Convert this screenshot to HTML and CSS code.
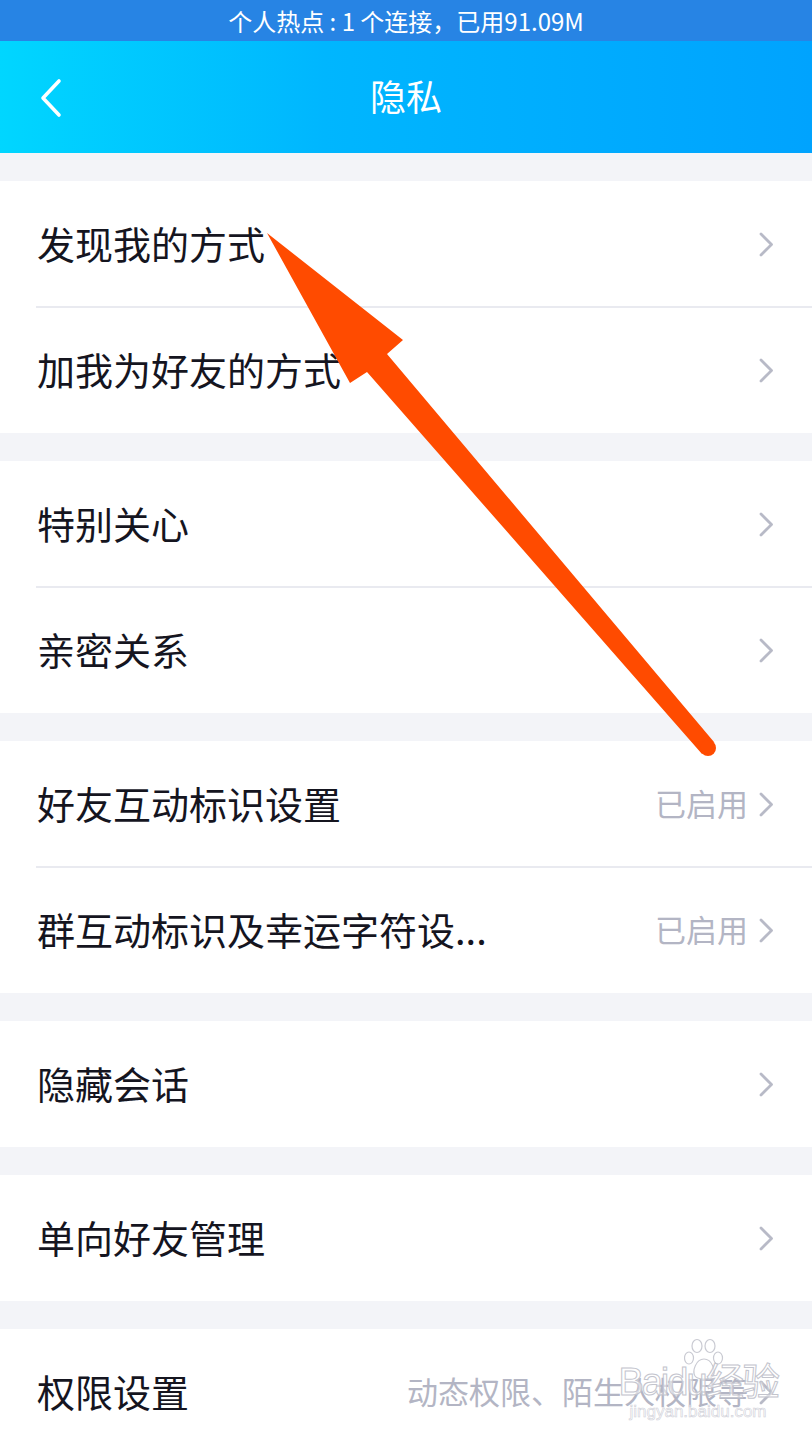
FILE: index.html
```html
<!DOCTYPE html>
<html lang="zh-CN">
<head>
    <meta charset="UTF-8">
    <meta name="viewport" content="width=device-width, initial-scale=1.0">
    <title>隐私</title>
    <link rel="stylesheet" href="styles.css">
</head>
<body>
    <div class="page">
        <div class="status">个人热点 : 1 个连接，已用91.09M</div>
        <div class="header">
            <svg class="back" width="26" height="40" viewBox="0 0 26 40">
                <polyline points="21,3 5,20 21,37" fill="none" stroke="#fff" stroke-width="3.6" stroke-linecap="round" stroke-linejoin="round"/>
            </svg>
            <div class="title">隐私</div>
        </div>

        <div class="group">
            <div class="row"><span class="label">发现我的方式</span><svg class="chev" width="15" height="25" viewBox="0 0 15 25"><polyline points="2,2 12.5,12.5 2,23" fill="none" stroke="#b8bac7" stroke-width="2.8" stroke-linecap="round" stroke-linejoin="round"/></svg></div>
            <div class="row"><span class="label">加我为好友的方式</span><svg class="chev" width="15" height="25" viewBox="0 0 15 25"><polyline points="2,2 12.5,12.5 2,23" fill="none" stroke="#b8bac7" stroke-width="2.8" stroke-linecap="round" stroke-linejoin="round"/></svg></div>
        </div>
        <div class="group">
            <div class="row"><span class="label">特别关心</span><svg class="chev" width="15" height="25" viewBox="0 0 15 25"><polyline points="2,2 12.5,12.5 2,23" fill="none" stroke="#b8bac7" stroke-width="2.8" stroke-linecap="round" stroke-linejoin="round"/></svg></div>
            <div class="row"><span class="label">亲密关系</span><svg class="chev" width="15" height="25" viewBox="0 0 15 25"><polyline points="2,2 12.5,12.5 2,23" fill="none" stroke="#b8bac7" stroke-width="2.8" stroke-linecap="round" stroke-linejoin="round"/></svg></div>
        </div>
        <div class="group">
            <div class="row"><span class="label">好友互动标识设置</span><span class="value">已启用</span><svg class="chev" width="15" height="25" viewBox="0 0 15 25"><polyline points="2,2 12.5,12.5 2,23" fill="none" stroke="#b8bac7" stroke-width="2.8" stroke-linecap="round" stroke-linejoin="round"/></svg></div>
            <div class="row"><span class="label">群互动标识及幸运字符设...</span><span class="value">已启用</span><svg class="chev" width="15" height="25" viewBox="0 0 15 25"><polyline points="2,2 12.5,12.5 2,23" fill="none" stroke="#b8bac7" stroke-width="2.8" stroke-linecap="round" stroke-linejoin="round"/></svg></div>
        </div>
        <div class="group">
            <div class="row"><span class="label">隐藏会话</span><svg class="chev" width="15" height="25" viewBox="0 0 15 25"><polyline points="2,2 12.5,12.5 2,23" fill="none" stroke="#b8bac7" stroke-width="2.8" stroke-linecap="round" stroke-linejoin="round"/></svg></div>
        </div>
        <div class="group">
            <div class="row"><span class="label">单向好友管理</span><svg class="chev" width="15" height="25" viewBox="0 0 15 25"><polyline points="2,2 12.5,12.5 2,23" fill="none" stroke="#b8bac7" stroke-width="2.8" stroke-linecap="round" stroke-linejoin="round"/></svg></div>
        </div>
        <div class="group">
            <div class="row"><span class="label">权限设置</span><span class="value">动态权限、陌生人权限等</span><svg class="chev" width="15" height="25" viewBox="0 0 15 25"><polyline points="2,2 12.5,12.5 2,23" fill="none" stroke="#b8bac7" stroke-width="2.8" stroke-linecap="round" stroke-linejoin="round"/></svg></div>
        </div>

        <svg class="arrow" width="812" height="1444" viewBox="0 0 812 1444">
            <polygon points="267,233 403,340 387,354 714,742 702,754 367,372 350,383" fill="#ff4b00"/>
            <circle cx="708" cy="748" r="8" fill="#ff4b00"/>
        </svg>

        <div class="watermark">
            <svg class="paw" width="40" height="44" viewBox="0 0 40 44">
                <g fill="rgba(255,255,255,0.6)" stroke="#c9cad2" stroke-width="1.2">
                    <ellipse cx="13" cy="8" rx="5" ry="6.5"/>
                    <ellipse cx="26" cy="8" rx="5" ry="6.5"/>
                    <ellipse cx="5" cy="20" rx="4.5" ry="6"/>
                    <ellipse cx="34" cy="20" rx="4.5" ry="6"/>
                    <path d="M20 21 C12 21 8 33 11 38 C14 42 26 42 29 38 C32 33 28 21 20 21 Z"/>
                </g>
            </svg>
            <div class="wm-logo">Baidu经验</div>
            <div class="wm-url">jingyan.baidu.com</div>
        </div>
    </div>
</body>
</html>
```

FILE: styles.css
```css
body {
    margin: 0;
    padding: 0;
    background-color: #f3f4f8;
    font-family: "Noto Sans CJK SC", "Noto Sans", sans-serif;
    color: #15151f;
}

.page {
    position: relative;
    width: 812px;
    height: 1444px;
    overflow: hidden;
}

.status {
    height: 41px;
    background-color: #2784e4;
    color: #ffffff;
    font-size: 24px;
    line-height: 41px;
    text-align: center;
}

.header {
    position: relative;
    height: 112px;
    background: linear-gradient(90deg, #00d6ff 0%, #00b6fe 40%, #00a3fe 100%);
    display: flex;
    align-items: center;
    justify-content: center;
    margin-bottom: 28px;
}

.back {
    position: absolute;
    left: 38px;
    top: 37px;
}

.title {
    color: #ffffff;
    font-size: 36px;
    padding-bottom: 4px;
}

.group {
    background-color: #ffffff;
    margin-bottom: 28px;
}

.row {
    height: 126px;
    display: flex;
    align-items: center;
    padding-left: 37px;
    padding-right: 38px;
    position: relative;
}

.row + .row::before {
    content: "";
    position: absolute;
    left: 36px;
    right: 0;
    top: -1px;
    height: 2px;
    background-color: #e9eaf0;
}

.label {
    flex: 1;
    font-size: 38px;
    white-space: nowrap;
    padding-bottom: 4px;
}

.value {
    font-size: 31px;
    color: #b3b5c4;
    margin-right: 11px;
    padding-bottom: 3px;
}

.chev {
    display: block;
}

.arrow {
    position: absolute;
    left: 0;
    top: 0;
    pointer-events: none;
}

.watermark {
    position: absolute;
    left: 618px;
    top: 1338px;
    width: 160px;
    text-align: center;
    pointer-events: none;
}

.paw {
    position: absolute;
    left: 66px;
    top: 0;
}

.wm-logo {
    position: relative;
    margin-top: 24px;
    font-family: "Liberation Sans", sans-serif;
    font-size: 38px;
    line-height: 40px;
    color: rgba(255, 255, 255, 0.55);
    -webkit-text-stroke: 1px #c3c4cd;
    letter-spacing: -2px;
}

.wm-url {
    font-family: "Liberation Sans", sans-serif;
    font-size: 17px;
    line-height: 20px;
    color: rgba(255, 255, 255, 0.6);
    -webkit-text-stroke: 0.6px #cfd0d8;
}
```
